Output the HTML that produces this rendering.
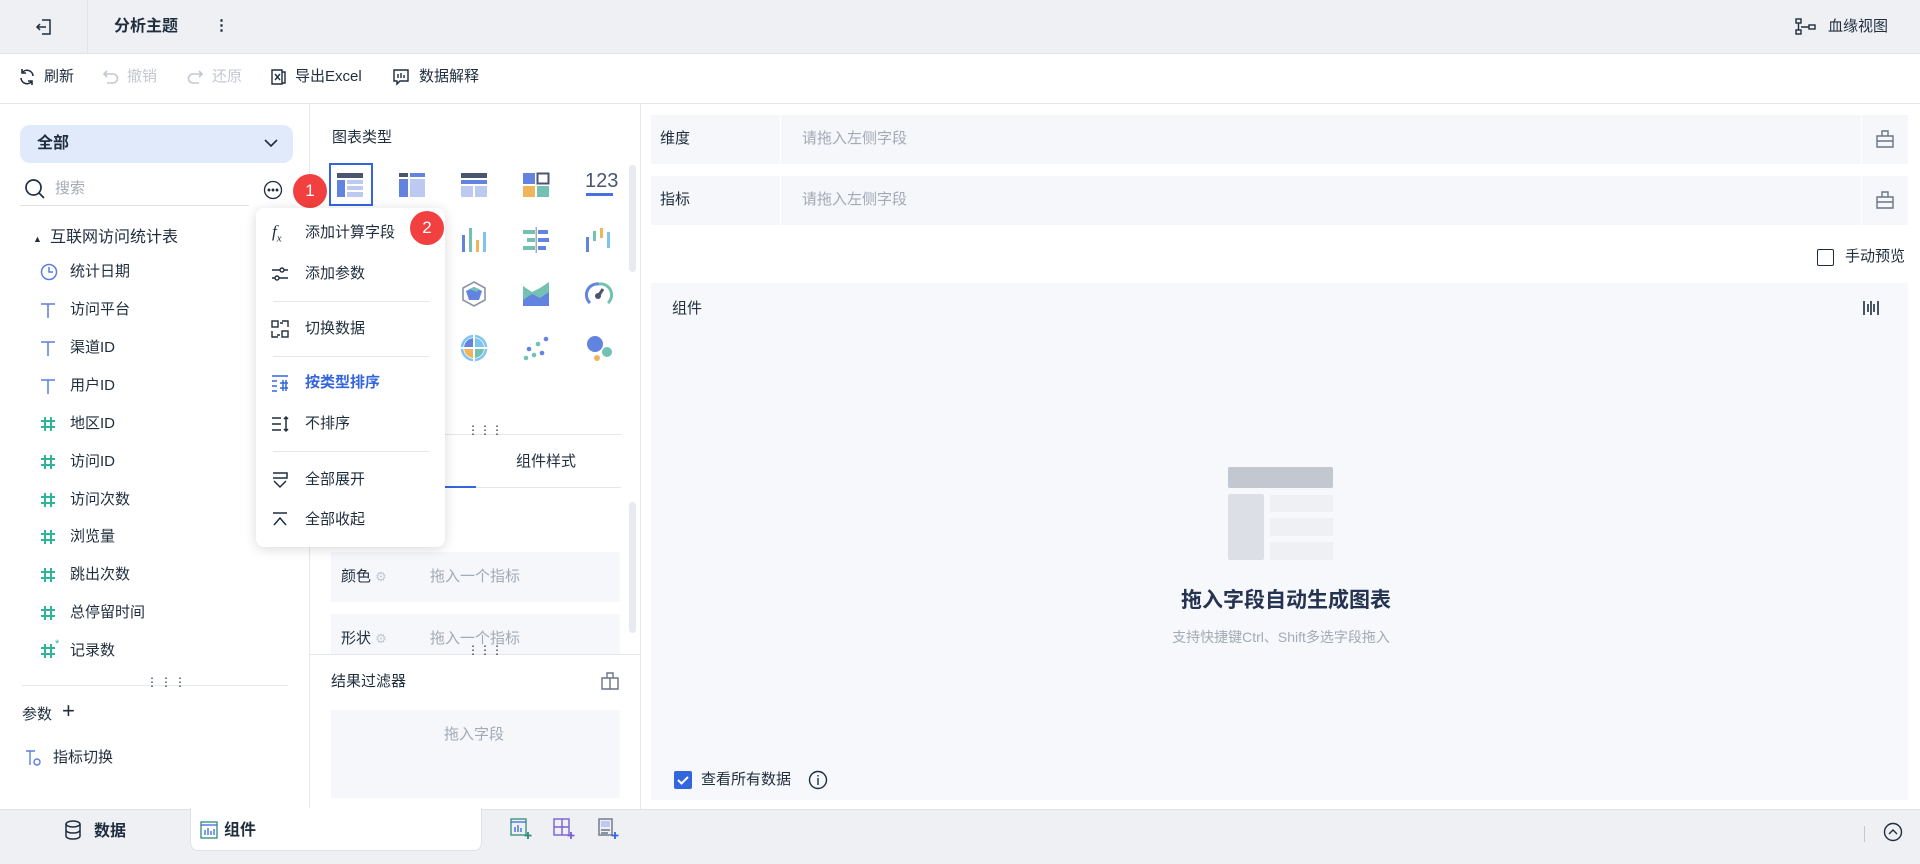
<!DOCTYPE html>
<html><head><meta charset="utf-8"><style>
*{box-sizing:border-box;margin:0;padding:0}
body{width:1920px;height:864px;position:relative;overflow:hidden;background:#fff;font-family:"Liberation Sans","Noto Sans CJK SC",sans-serif;font-size:15px;color:#1f2d3d}
.a{position:absolute}
.t{position:absolute;white-space:nowrap;line-height:20px}
.g{color:#a3a9b5}
svg{position:absolute}
</style></head><body>
<svg width="0" height="0" style="position:absolute"><defs>
<g id="hs" fill="none" stroke="#2fb39a" stroke-width="2"><path d="M6 2v14M12 2v14M2 6h14M2 12h14"/></g>
<g id="tt" fill="none" stroke="#5b7de0" stroke-width="1.5"><path d="M2 3h14M9 3v14"/></g>
</defs></svg>
<!-- top bar -->
<div class="a" style="left:0;top:0;width:1920px;height:54px;background:#eef0f4;border-bottom:1px solid #e1e4ea"></div>
<div class="a" style="left:87px;top:0;width:1px;height:54px;background:#e1e4ea"></div>
<svg style="left:34px;top:17px" width="20" height="20" viewBox="0 0 20 20" fill="none" stroke="#1f2d3d" stroke-width="1.5"><path d="M8 3h8v14H8M3 10h9M6 7l-3 3 3 3"/></svg>
<div class="t" style="left:114px;top:17px;font-weight:bold;font-size:16px">分析主题</div>
<div class="t" style="left:214px;top:16px;font-weight:bold">⋮</div>
<svg style="left:1795px;top:17px" width="22" height="20" viewBox="0 0 22 20" fill="none" stroke="#1f2d3d" stroke-width="1.4"><rect x="1" y="2" width="5" height="4"/><rect x="1" y="13" width="5" height="4"/><rect x="14" y="8" width="6" height="4"/><path d="M3.5 6v7M6 10h8"/></svg>
<div class="t" style="left:1828px;top:17px">血缘视图</div>
<!-- toolbar -->
<div class="a" style="left:0;top:103px;width:1920px;height:1px;background:#e4e7ec"></div>
<svg style="left:18px;top:68px" width="18" height="18" viewBox="0 0 18 18" fill="none" stroke="#1f2d3d" stroke-width="1.6"><path d="M15 8A6 6 0 0 0 4 5M3 10a6 6 0 0 0 11 3M4 1v4h4M14 17v-4h-4"/></svg>
<div class="t" style="left:44px;top:67px">刷新</div>
<svg style="left:102px;top:68px" width="18" height="18" viewBox="0 0 18 18" fill="none" stroke="#c3c8d0" stroke-width="1.6"><path d="M5 3L2 6l3 3M2 6h9a4.5 4.5 0 0 1 0 9H5"/></svg>
<div class="t g" style="left:127px;top:67px;color:#c3c8d0">撤销</div>
<svg style="left:186px;top:68px" width="18" height="18" viewBox="0 0 18 18" fill="none" stroke="#c3c8d0" stroke-width="1.6"><path d="M13 3l3 3-3 3M16 6H7a4.5 4.5 0 0 0 0 9h6"/></svg>
<div class="t" style="left:212px;top:67px;color:#c3c8d0">还原</div>
<svg style="left:270px;top:68px" width="18" height="18" viewBox="0 0 18 18" fill="none" stroke="#1f2d3d" stroke-width="1.4"><path d="M2 2h10v14H2zM12 4h3v11h-3M5 6l5 6M10 6l-5 6"/></svg>
<div class="t" style="left:295px;top:67px">导出Excel</div>
<svg style="left:392px;top:68px" width="18" height="18" viewBox="0 0 18 18" fill="none" stroke="#1f2d3d" stroke-width="1.4"><path d="M2 2h14v11H8l-3 3v-3H2zM6 6v4M9 5v5M12 7v3"/></svg>
<div class="t" style="left:419px;top:67px">数据解释</div>
<!-- left panel -->
<div class="a" style="left:309px;top:104px;width:1px;height:705px;background:#e4e7ec"></div>
<div class="a" style="left:20px;top:125px;width:273px;height:38px;background:#e0eafb;border-radius:10px"></div>
<div class="t" style="left:37px;top:134px;font-weight:bold;font-size:16px">全部</div>
<svg style="left:263px;top:137px" width="16" height="12" viewBox="0 0 16 12" fill="none" stroke="#1f2d3d" stroke-width="1.6"><path d="M2 3l6 6 6-6"/></svg>
<svg style="left:24px;top:178px" width="22" height="22" viewBox="0 0 22 22" fill="none" stroke="#1f2d3d" stroke-width="1.7"><circle cx="9.5" cy="9.5" r="7.5"/><path d="M15 15l5 5"/></svg>
<div class="t g" style="left:55px;top:179px">搜索</div>
<div class="a" style="left:20px;top:205px;width:229px;height:1px;background:#dfe2e7"></div>
<svg style="left:263px;top:180px" width="20" height="20" viewBox="0 0 20 20" fill="none" stroke="#1f2d3d" stroke-width="1.3"><circle cx="10" cy="10" r="8.5"/><circle cx="6" cy="10" r=".8" fill="#1f2d3d"/><circle cx="10" cy="10" r=".8" fill="#1f2d3d"/><circle cx="14" cy="10" r=".8" fill="#1f2d3d"/></svg>
<div class="a" style="left:293px;top:174px;width:34px;height:34px;border-radius:50%;background:#f23f3f;color:#fff;text-align:center;line-height:34px;font-size:17px">1</div>
<div class="t" style="left:33px;top:229px;font-size:9px">▲</div>
<div class="t" style="left:50px;top:228px;font-size:16px">互联网访问统计表</div>
<svg style="left:40px;top:263px" width="18" height="18" viewBox="0 0 18 18" fill="none" stroke="#5b7de0" stroke-width="1.5"><circle cx="9" cy="9" r="7.5"/><path d="M9 4v5h4"/></svg>
<div class="t" style="left:70px;top:262px">统计日期</div>
<svg style="left:39px;top:301px" width="18" height="18"><use href="#tt"/></svg><div class="t" style="left:70px;top:300px">访问平台</div>
<svg style="left:39px;top:339px" width="18" height="18"><use href="#tt"/></svg><div class="t" style="left:70px;top:338px">渠道ID</div>
<svg style="left:39px;top:377px" width="18" height="18"><use href="#tt"/></svg><div class="t" style="left:70px;top:376px">用户ID</div>
<svg style="left:39px;top:415px" width="18" height="18"><use href="#hs"/></svg><div class="t" style="left:70px;top:414px">地区ID</div>
<svg style="left:39px;top:453px" width="18" height="18"><use href="#hs"/></svg><div class="t" style="left:70px;top:452px">访问ID</div>
<svg style="left:39px;top:491px" width="18" height="18"><use href="#hs"/></svg><div class="t" style="left:70px;top:490px">访问次数</div>
<svg style="left:39px;top:528px" width="18" height="18"><use href="#hs"/></svg><div class="t" style="left:70px;top:527px">浏览量</div>
<svg style="left:39px;top:566px" width="18" height="18"><use href="#hs"/></svg><div class="t" style="left:70px;top:565px">跳出次数</div>
<svg style="left:39px;top:604px" width="18" height="18"><use href="#hs"/></svg><div class="t" style="left:70px;top:603px">总停留时间</div>
<svg style="left:39px;top:642px" width="18" height="18"><use href="#hs"/></svg><div class="t" style="left:55px;top:634px;color:#2fb39a;font-size:11px">*</div><div class="t" style="left:70px;top:641px">记录数</div>
<div class="a" style="left:22px;top:685px;width:266px;height:1px;background:#e4e7ec"></div>
<div class="t" style="left:146px;top:672px;font-size:12px;letter-spacing:2px">⋮⋮⋮</div>
<div class="t" style="left:22px;top:705px">参数</div>
<div class="t" style="left:62px;top:701px;font-size:22px">+</div>
<svg style="left:24px;top:748px" width="20" height="20" viewBox="0 0 20 20" fill="none" stroke="#5b7de0" stroke-width="1.4"><path d="M2 3h9M6 3v14"/><circle cx="13" cy="14" r="3"/></svg>
<div class="t" style="left:53px;top:748px">指标切换</div>
<!-- middle panel -->
<div class="a" style="left:640px;top:104px;width:1px;height:705px;background:#e4e7ec"></div>
<div class="t" style="left:332px;top:128px">图表类型</div>
<div class="a" style="left:629px;top:165px;width:7px;height:107px;border-radius:4px;background:#e8eaee"></div>
<div class="a" style="left:329px;top:163px;width:44px;height:43px;border:2px solid #3366dd"></div>
<svg style="left:336px;top:172px" width="28" height="26"><rect x="1" y="1" width="26" height="5" fill="#4a5670"/><rect x="1" y="8" width="8" height="17" fill="#6383e0"/><rect x="11" y="8" width="16" height="4" fill="#bccaf2"/><rect x="11" y="14" width="16" height="4" fill="#bccaf2"/><rect x="11" y="20" width="16" height="5" fill="#bccaf2"/></svg>
<svg style="left:398px;top:172px" width="28" height="26"><rect x="1" y="1" width="9" height="4" fill="#4a5670"/><rect x="12" y="1" width="15" height="4" fill="#6383e0"/><rect x="1" y="7" width="9" height="18" fill="#6383e0"/><rect x="12" y="7" width="15" height="18" fill="#bccaf2"/></svg>
<svg style="left:460px;top:172px" width="28" height="26"><rect x="1" y="1" width="26" height="5" fill="#4a5670"/><rect x="1" y="8" width="26" height="4" fill="#6383e0"/><rect x="1" y="14" width="12" height="11" fill="#bccaf2"/><rect x="15" y="14" width="12" height="11" fill="#bccaf2"/></svg>
<svg style="left:522px;top:172px" width="28" height="26"><rect x="1" y="1" width="12" height="11" fill="#6383e0"/><rect x="15.5" y="1.5" width="11" height="10" fill="none" stroke="#4a5670" stroke-width="2"/><rect x="1" y="14" width="12" height="11" fill="#f0b45a"/><rect x="15" y="14" width="12" height="11" fill="#72c1b2"/></svg>
<div class="t" style="left:585px;top:171px;font-size:20px;color:#4a5670">123</div>
<div class="a" style="left:586px;top:193px;width:27px;height:3px;background:#4a6fe0"></div>
<svg style="left:460px;top:227px" width="28" height="26"><rect x="2" y="8" width="3" height="17" fill="#6383e0"/><rect x="9" y="1" width="3" height="24" fill="#72c1b2"/><rect x="16" y="13" width="3" height="12" fill="#f0b45a"/><rect x="23" y="5" width="3" height="20" fill="#7ec4f0"/></svg>
<svg style="left:522px;top:227px" width="28" height="26"><rect x="1" y="3" width="12" height="4" fill="#72c1b2"/><rect x="16" y="3" width="10" height="4" fill="#6383e0"/><rect x="5" y="11" width="8" height="4" fill="#72c1b2"/><rect x="16" y="11" width="11" height="4" fill="#6383e0"/><rect x="1" y="19" width="12" height="4" fill="#72c1b2"/><rect x="16" y="19" width="8" height="4" fill="#6383e0"/><rect x="13.5" y="0" width="1.5" height="26" fill="#aab"/></svg>
<svg style="left:585px;top:227px" width="28" height="26"><rect x="1" y="10" width="3" height="15" fill="#6383e0"/><rect x="8" y="4" width="3" height="10" fill="#72c1b2"/><rect x="15" y="1" width="3" height="10" fill="#f0b45a"/><rect x="22" y="5" width="3" height="16" fill="#7ec4f0"/></svg>
<svg style="left:460px;top:280px" width="28" height="28"><path d="M14 2l11 6v12l-11 6-11-6V8z" fill="none" stroke="#8b93a5" stroke-width="1.6"/><path d="M14 7l8 4-3 9h-10l-3-9z" fill="#6383e0"/><path d="M9 9l5-2 5 2-2 3z" fill="#72c1b2"/></svg>
<svg style="left:522px;top:280px" width="28" height="28"><path d="M1 6l9 6 8-4 9-6v16l-9 4-8-3-9 4z" fill="#72c1b2"/><path d="M1 20l9-6 8 4 9-6v14H1z" fill="#6383e0"/></svg>
<svg style="left:585px;top:280px" width="28" height="28"><path d="M5 23A11 11 0 0 1 14 4" fill="none" stroke="#6383e0" stroke-width="3"/><path d="M14 4a11 11 0 0 1 9 19" fill="none" stroke="#72c1b2" stroke-width="3"/><path d="M18 9l-4 6" stroke="#4a5670" stroke-width="3"/><circle cx="13" cy="16" r="3" fill="#4a5670"/></svg>
<svg style="left:460px;top:334px" width="28" height="28"><circle cx="14" cy="14" r="12" fill="none" stroke="#7ec4f0" stroke-width="2.5"/><path d="M14 4v10H4a10 10 0 0 1 10-10z" fill="#6383e0"/><path d="M14 4a10 10 0 0 1 10 10H14z" fill="#7ec4f0"/><path d="M4 14h10v10A10 10 0 0 1 4 14z" fill="#f0b45a"/><path d="M14 14h10a10 10 0 0 1-10 10z" fill="#72c1b2"/><path d="M14 1v26M1 14h26" stroke="#fff" stroke-width="2"/></svg>
<svg style="left:522px;top:334px" width="28" height="28"><g fill="#6383e0"><circle cx="7" cy="15" r="2.3"/><circle cx="20" cy="19" r="2.3"/><circle cx="24" cy="5" r="2.3"/></g><g fill="#72c1b2"><circle cx="4" cy="24" r="2.3"/><circle cx="12" cy="21" r="2.3"/><circle cx="16" cy="10" r="2.3"/></g></svg>
<svg style="left:585px;top:334px" width="28" height="28"><circle cx="10" cy="10" r="8" fill="#6383e0"/><circle cx="22" cy="18" r="5" fill="#72c1b2"/><circle cx="12" cy="24" r="3" fill="#f0b45a"/></svg>
<div class="a" style="left:321px;top:434px;width:300px;height:1px;background:#e4e7ec"></div>
<div class="t" style="left:467px;top:420px;font-size:12px">⋮⋮⋮</div>
<div class="t" style="left:516px;top:452px">组件样式</div>
<div class="a" style="left:321px;top:487px;width:300px;height:1px;background:#e4e7ec"></div>
<div class="a" style="left:386px;top:486px;width:90px;height:2px;background:#3366dd"></div>
<div class="a" style="left:629px;top:502px;width:7px;height:131px;border-radius:4px;background:#e8eaee"></div>
<div class="a" style="left:331px;top:552px;width:289px;height:50px;background:#f5f7fa"></div>
<div class="t" style="left:341px;top:567px">颜色 <span style="color:#c3c8d0;font-size:13px">⚙</span></div>
<div class="t g" style="left:430px;top:567px">拖入一个指标</div>
<div class="a" style="left:331px;top:614px;width:289px;height:40px;background:#f5f7fa"></div>
<div class="t" style="left:341px;top:629px">形状 <span style="color:#c3c8d0;font-size:13px">⚙</span></div>
<div class="t g" style="left:430px;top:629px">拖入一个指标</div>
<div class="a" style="left:310px;top:654px;width:330px;height:155px;background:#fff;border-top:1px solid #e4e7ec"></div>
<div class="t" style="left:467px;top:640px;font-size:12px">⋮⋮⋮</div>
<div class="t" style="left:331px;top:672px">结果过滤器</div>
<svg style="left:601px;top:672px" width="18" height="18" viewBox="0 0 18 18" fill="none" stroke="#6b7385" stroke-width="1.4"><path d="M1 6h16v11H1zM6 6V1h6v5M9 6v11"/></svg>
<div class="a" style="left:331px;top:710px;width:289px;height:88px;background:#f5f7fa"></div>
<div class="t g" style="left:444px;top:725px">拖入字段</div>
<!-- menu -->
<div class="a" style="left:256px;top:208px;width:189px;height:339px;background:#fff;border-radius:8px;box-shadow:0 2px 12px rgba(0,0,0,.15)"></div>
<div class="t" style="left:272px;top:222px;font-style:italic;font-family:'Liberation Serif',serif;font-size:17px">f<sub style="font-size:11px">x</sub></div>
<div class="t" style="left:305px;top:223px">添加计算字段</div>
<div class="a" style="left:410px;top:211px;width:34px;height:34px;border-radius:50%;background:#f23f3f;color:#fff;text-align:center;line-height:34px;font-size:17px">2</div>
<svg style="left:271px;top:265px" width="18" height="18" viewBox="0 0 18 18" fill="none" stroke="#1f2d3d" stroke-width="1.4"><path d="M1 5h16M1 13h16"/><circle cx="11" cy="5" r="2" fill="#fff"/><circle cx="6" cy="13" r="2" fill="#fff"/></svg>
<div class="t" style="left:305px;top:264px">添加参数</div>
<div class="a" style="left:273px;top:301px;width:156px;height:1px;background:#e4e7ec"></div>
<svg style="left:271px;top:320px" width="18" height="18" viewBox="0 0 18 18" fill="none" stroke="#1f2d3d" stroke-width="1.4"><rect x="1" y="1" width="6" height="6"/><rect x="11" y="11" width="6" height="6"/><path d="M1 11v6h6M11 1h6v6M9 3h3M9 15H6"/></svg>
<div class="t" style="left:305px;top:319px">切换数据</div>
<div class="a" style="left:273px;top:356px;width:156px;height:1px;background:#e4e7ec"></div>
<svg style="left:271px;top:374px" width="18" height="18" viewBox="0 0 18 18" fill="none" stroke="#3366dd" stroke-width="1.5"><path d="M1 2h16M1 7h5M1 12h5M1 17h5M9 9h8M9 14h8M12 6v11M15 6v11"/></svg>
<div class="t" style="left:305px;top:373px;color:#3366dd;font-weight:bold">按类型排序</div>
<svg style="left:271px;top:415px" width="18" height="18" viewBox="0 0 18 18" fill="none" stroke="#1f2d3d" stroke-width="1.5"><path d="M1 3h9M1 9h9M1 15h9M15 2v14M13 4l2-2 2 2M13 14l2 2 2-2"/></svg>
<div class="t" style="left:305px;top:414px">不排序</div>
<div class="a" style="left:273px;top:451px;width:156px;height:1px;background:#e4e7ec"></div>
<svg style="left:271px;top:471px" width="18" height="18" viewBox="0 0 18 18" fill="none" stroke="#1f2d3d" stroke-width="1.5"><path d="M2 2h14v5H2M3 10l6 6 6-6"/></svg>
<div class="t" style="left:305px;top:470px">全部展开</div>
<svg style="left:271px;top:511px" width="18" height="18" viewBox="0 0 18 18" fill="none" stroke="#1f2d3d" stroke-width="1.5"><path d="M2 2h14M3 14l6-7 6 7"/></svg>
<div class="t" style="left:305px;top:510px">全部收起</div>
<!-- right panel -->
<div class="a" style="left:651px;top:115px;width:1257px;height:49px;background:#f5f7fa"></div>
<div class="a" style="left:780px;top:115px;width:1px;height:49px;background:#fff"></div>
<div class="a" style="left:1861px;top:115px;width:1px;height:49px;background:#fff"></div>
<div class="t" style="left:660px;top:129px">维度</div>
<div class="t g" style="left:802px;top:129px">请拖入左侧字段</div>
<svg style="left:1876px;top:130px" width="18" height="18" viewBox="0 0 18 18" fill="none" stroke="#6b7385" stroke-width="1.4"><path d="M1 6h16v11H1zM6 6V1h6v5M1 11h16"/></svg>
<div class="a" style="left:651px;top:176px;width:1257px;height:49px;background:#f5f7fa"></div>
<div class="a" style="left:780px;top:176px;width:1px;height:49px;background:#fff"></div>
<div class="a" style="left:1861px;top:176px;width:1px;height:49px;background:#fff"></div>
<div class="t" style="left:660px;top:190px">指标</div>
<div class="t g" style="left:802px;top:190px">请拖入左侧字段</div>
<svg style="left:1876px;top:191px" width="18" height="18" viewBox="0 0 18 18" fill="none" stroke="#6b7385" stroke-width="1.4"><path d="M1 6h16v11H1zM6 6V1h6v5M1 11h16"/></svg>
<div class="a" style="left:1817px;top:249px;width:17px;height:17px;border:1.5px solid #1f2d3d;border-radius:2px"></div>
<div class="t" style="left:1845px;top:247px">手动预览</div>
<div class="a" style="left:651px;top:283px;width:1257px;height:517px;background:#f6f8fc"></div>
<div class="t" style="left:672px;top:299px">组件</div>
<svg style="left:1862px;top:299px" width="18" height="18" viewBox="0 0 18 18" stroke="#1f2d3d" stroke-width="1.6"><path d="M2 2v14M6 5v8M9 2v14M12 5v8M16 2v14"/></svg>
<div class="a" style="left:1228px;top:467px;width:105px;height:21px;background:#c2c7d0;border-radius:2px"></div>
<div class="a" style="left:1228px;top:494px;width:36px;height:66px;background:#dce0e6;border-radius:2px"></div>
<div class="a" style="left:1270px;top:495px;width:63px;height:17px;background:#eef0f4"></div>
<div class="a" style="left:1270px;top:518px;width:63px;height:18px;background:#eef0f4"></div>
<div class="a" style="left:1270px;top:542px;width:63px;height:18px;background:#eef0f4"></div>
<div class="t" style="left:1181px;top:588px;width:200px;text-align:center;font-size:21px;font-weight:bold;color:#253350;line-height:26px">拖入字段自动生成图表</div>
<div class="t" style="left:1131px;top:627px;width:300px;text-align:center;font-size:14px;color:#a3a9b5">支持快捷键Ctrl、Shift多选字段拖入</div>
<div class="a" style="left:674px;top:771px;width:18px;height:18px;background:#3366dd;border-radius:2px"></div>
<svg style="left:674px;top:771px" width="18" height="18"><path d="M4 9l3.5 3.5L14 6" fill="none" stroke="#fff" stroke-width="2"/></svg>
<div class="t" style="left:701px;top:770px">查看所有数据</div>
<svg style="left:808px;top:770px" width="20" height="20" viewBox="0 0 20 20" fill="none" stroke="#1f2d3d" stroke-width="1.4"><circle cx="10" cy="10" r="8.5"/><path d="M10 8v7M10 5v1.5"/></svg>
<!-- bottom bar -->
<div class="a" style="left:0;top:809px;width:1920px;height:55px;background:#eef0f4;border-top:1px solid #dfe2e7"></div>
<svg style="left:64px;top:820px" width="18" height="20" viewBox="0 0 18 20" fill="none" stroke="#1f2d3d" stroke-width="1.5"><ellipse cx="9" cy="4" rx="7" ry="3"/><path d="M2 4v12c0 1.7 3 3 7 3s7-1.3 7-3V4M2 10c0 1.7 3 3 7 3s7-1.3 7-3"/></svg>
<div class="t" style="left:94px;top:822px;font-weight:bold;font-size:16px">数据</div>
<div class="a" style="left:190px;top:808px;width:292px;height:43px;background:#fff;border:1px solid #dfe2e7;border-top:none;border-radius:0 0 8px 8px"></div>
<svg style="left:200px;top:821px" width="18" height="18" viewBox="0 0 18 18" fill="none" stroke="#2e8b7a" stroke-width="1.3"><rect x="1" y="1" width="16" height="16"/><path d="M1 4h16M5 14V9M8 14V7M11 14v-4M14 14V8" stroke="#3366dd"/></svg>
<div class="t" style="left:224px;top:821px;font-weight:bold;font-size:16px">组件</div>
<svg style="left:510px;top:818px" width="22" height="22" viewBox="0 0 22 22" fill="none" stroke="#2e8b7a" stroke-width="1.3"><rect x="1" y="1" width="15" height="16"/><path d="M1 4h15M5 14V9M8 14V7M11 14v-4" stroke="#3366dd"/><path d="M18 14v7M14.5 17.5h7" stroke="#2e8b7a" stroke-width="1.8"/></svg>
<svg style="left:553px;top:818px" width="22" height="22" viewBox="0 0 22 22" fill="none" stroke="#7a5fd6" stroke-width="1.4"><rect x="1" y="1" width="15" height="16"/><path d="M9 1v16M1 9h15"/><path d="M18 14v7M14.5 17.5h7" stroke-width="1.8"/></svg>
<svg style="left:597px;top:818px" width="22" height="22" viewBox="0 0 22 22" fill="none" stroke="#6b7385" stroke-width="1.4"><rect x="2" y="1" width="13" height="16"/><rect x="4" y="3" width="9" height="6" fill="#bccaf2" stroke="none"/><path d="M4 12h9M4 15h7"/><path d="M18 14v7M14.5 17.5h7" stroke="#3366dd" stroke-width="1.8"/></svg>
<div class="a" style="left:1864px;top:826px;width:1px;height:16px;background:#c3c8d0"></div>
<svg style="left:1883px;top:822px" width="20" height="20" viewBox="0 0 20 20" fill="none" stroke="#1f2d3d" stroke-width="1.4"><circle cx="10" cy="10" r="8.5"/><path d="M6 12l4-4 4 4"/></svg>
</body></html>
